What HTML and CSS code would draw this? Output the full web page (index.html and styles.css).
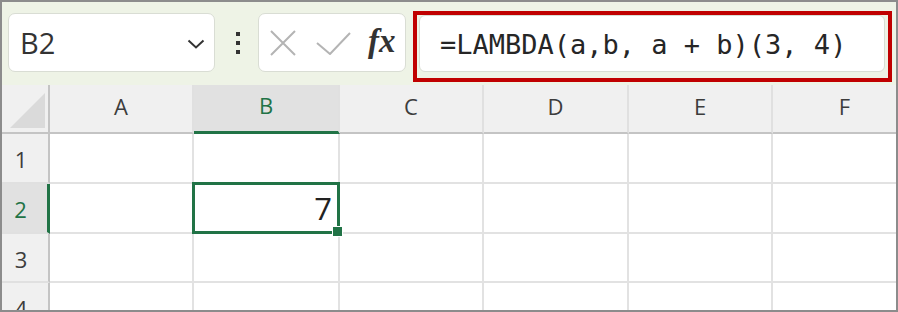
FILE: index.html
```html
<!DOCTYPE html>
<html lang="en">
<head>
    <meta charset="UTF-8">
    <meta name="viewport" content="width=device-width, initial-scale=1.0">
    <title>LAMBDA</title>
    <link rel="stylesheet" href="styles.css">
</head>
<body>
    <div class="window">
        <div class="formula-bar">
            <div class="name-box">
                <span class="cell-ref">B2</span>
                <svg class="chevron" width="18" height="10" viewBox="0 0 18 10">
                    <polyline points="1.5,1.5 9,8.5 16.5,1.5" fill="none" stroke="#333" stroke-width="2"/>
                </svg>
            </div>
            <div class="more">
                <svg width="6" height="24" viewBox="0 0 6 24">
                    <rect x="1" y="1" width="4" height="4" fill="#333"/>
                    <rect x="1" y="10" width="4" height="4" fill="#333"/>
                    <rect x="1" y="19" width="4" height="4" fill="#333"/>
                </svg>
            </div>
            <div class="edit-buttons">
                <svg class="cancel" width="26" height="26" viewBox="0 0 26 26">
                    <path d="M1 1 L25 25 M25 1 L1 25" stroke="#b4b4b4" stroke-width="2"/>
                </svg>
                <svg class="enter" width="35" height="23" viewBox="0 0 35 23">
                    <polyline points="1,11 14,22 34,1" fill="none" stroke="#b4b4b4" stroke-width="2"/>
                </svg>
                <span class="fx">fx</span>
            </div>
            <div class="highlight">
                <div class="formula-input">=LAMBDA(a,b, a + b)(3, 4)</div>
            </div>
        </div>

        <div class="sheet">
            <div class="corner"><span class="select-all"></span></div>
            <div class="col-head">A</div>
            <div class="col-head active">B</div>
            <div class="col-head">C</div>
            <div class="col-head">D</div>
            <div class="col-head">E</div>
            <div class="col-head">F</div>

            <div class="row-head">1</div>
            <div class="cell"></div><div class="cell"></div><div class="cell"></div>
            <div class="cell"></div><div class="cell"></div><div class="cell"></div>

            <div class="row-head active">2</div>
            <div class="cell"></div>
            <div class="cell selected">7</div>
            <div class="cell"></div><div class="cell"></div><div class="cell"></div><div class="cell"></div>

            <div class="row-head">3</div>
            <div class="cell"></div><div class="cell"></div><div class="cell"></div>
            <div class="cell"></div><div class="cell"></div><div class="cell"></div>

            <div class="row-head">4</div>
            <div class="cell"></div><div class="cell"></div><div class="cell"></div>
            <div class="cell"></div><div class="cell"></div><div class="cell"></div>
        </div>
    </div>
</body>
</html>
```

FILE: styles.css
```css
* {
    box-sizing: border-box;
}
body {
    margin: 0;
    font-family: "Open Sans", "Noto Sans", Arial, sans-serif;
    background: #fff;
}
.window {
    width: 898px;
    height: 312px;
    border: 2px solid #8c8c8c;
    overflow: hidden;
    background: #fff;
}

/* formula bar */
.formula-bar {
    height: 83px;
    background: #eef3e6;
    display: flex;
    align-items: flex-start;
    padding-top: 11px;
}
.name-box {
    margin-left: 6px;
    width: 207px;
    height: 59px;
    background: #fff;
    border: 1px solid #d9ddd4;
    border-radius: 7px;
    display: flex;
    align-items: center;
    justify-content: space-between;
    padding: 0 9px 0 11px;
}
.cell-ref {
    font-size: 29px;
    color: #333;
    line-height: 1;
}
.chevron {
    margin-top: 2px;
}
.more {
    width: 43px;
    height: 59px;
    display: flex;
    align-items: center;
    justify-content: center;
    padding-left: 2px;
}
.edit-buttons {
    width: 148px;
    height: 59px;
    background: #fff;
    border: 1px solid #d9ddd4;
    border-radius: 7px;
    display: flex;
    align-items: center;
    padding-left: 11px;
}
.enter {
    margin-left: 20px;
    margin-top: 1px;
}
.fx {
    margin-left: 17px;
    font-family: "Liberation Serif", "DejaVu Serif", serif;
    font-style: italic;
    font-weight: bold;
    font-size: 33px;
    color: #333;
    line-height: 1;
    margin-top: -2px;
}
.highlight {
    margin-left: 7px;
    margin-top: -2px;
    width: 479px;
    height: 71px;
    border: 4px solid #c00000;
    padding: 0 3px 5px 2px;
}
.formula-input {
    height: 57px;
    background: #fff;
    border: 1px solid #d9ddd4;
    border-radius: 6px;
    padding: 13px 0 0 20px;
    font-family: "DejaVu Sans Mono", "Liberation Mono", monospace;
    font-size: 27px;
    line-height: 32px;
    color: #262626;
    white-space: pre;
}

/* grid */
.sheet {
    display: grid;
    grid-template-columns: 48px 144px 146px 144px 145px 144px 145px;
    grid-template-rows: 49px 50px 50px 49px 50px;
    font-size: 22px;
    color: #3c3c3c;
}
.corner {
    background: #f0f0f0;
    border-right: 2px solid #c4c4c4;
    border-bottom: 2px solid #c4c4c4;
    padding: 8px 3px 4px 8px;
}
.select-all {
    display: block;
    width: 35px;
    height: 35px;
    background: #dadada;
    clip-path: polygon(100% 0, 100% 100%, 0 100%);
}
.col-head {
    background: #f0f0f0;
    border-right: 2px solid #e0e0e0;
    border-bottom: 2px solid #c4c4c4;
    display: flex;
    align-items: center;
    justify-content: center;
    padding-bottom: 6px;
}
.col-head.active {
    background: #e1e1e1;
    color: #217346;
    border-bottom: 3px solid #217346;
}
.row-head {
    background: #f0f0f0;
    border-right: 2px solid #c4c4c4;
    border-bottom: 2px solid #e0e0e0;
    display: flex;
    align-items: center;
    justify-content: center;
    padding: 2px 8px 0 0;
}
.row-head.active {
    background: #e1e1e1;
    color: #217346;
    border-right: 3px solid #217346;
}
.cell {
    border-right: 2px solid #e2e2e2;
    border-bottom: 2px solid #e2e2e2;
    background: #fff;
}
.cell.selected {
    position: relative;
    display: flex;
    align-items: center;
    justify-content: flex-end;
    padding-right: 6px;
    font-size: 31px;
    color: #222;
}
.cell.selected::after {
    content: "";
    position: absolute;
    left: -2px;
    top: -2px;
    right: -2px;
    bottom: -2px;
    border: 3px solid #217346;
}
.cell.selected::before {
    content: "";
    position: absolute;
    right: -5px;
    bottom: -5px;
    width: 9px;
    height: 9px;
    background: #217346;
    border: 1px solid #fff;
    z-index: 1;
}
```
